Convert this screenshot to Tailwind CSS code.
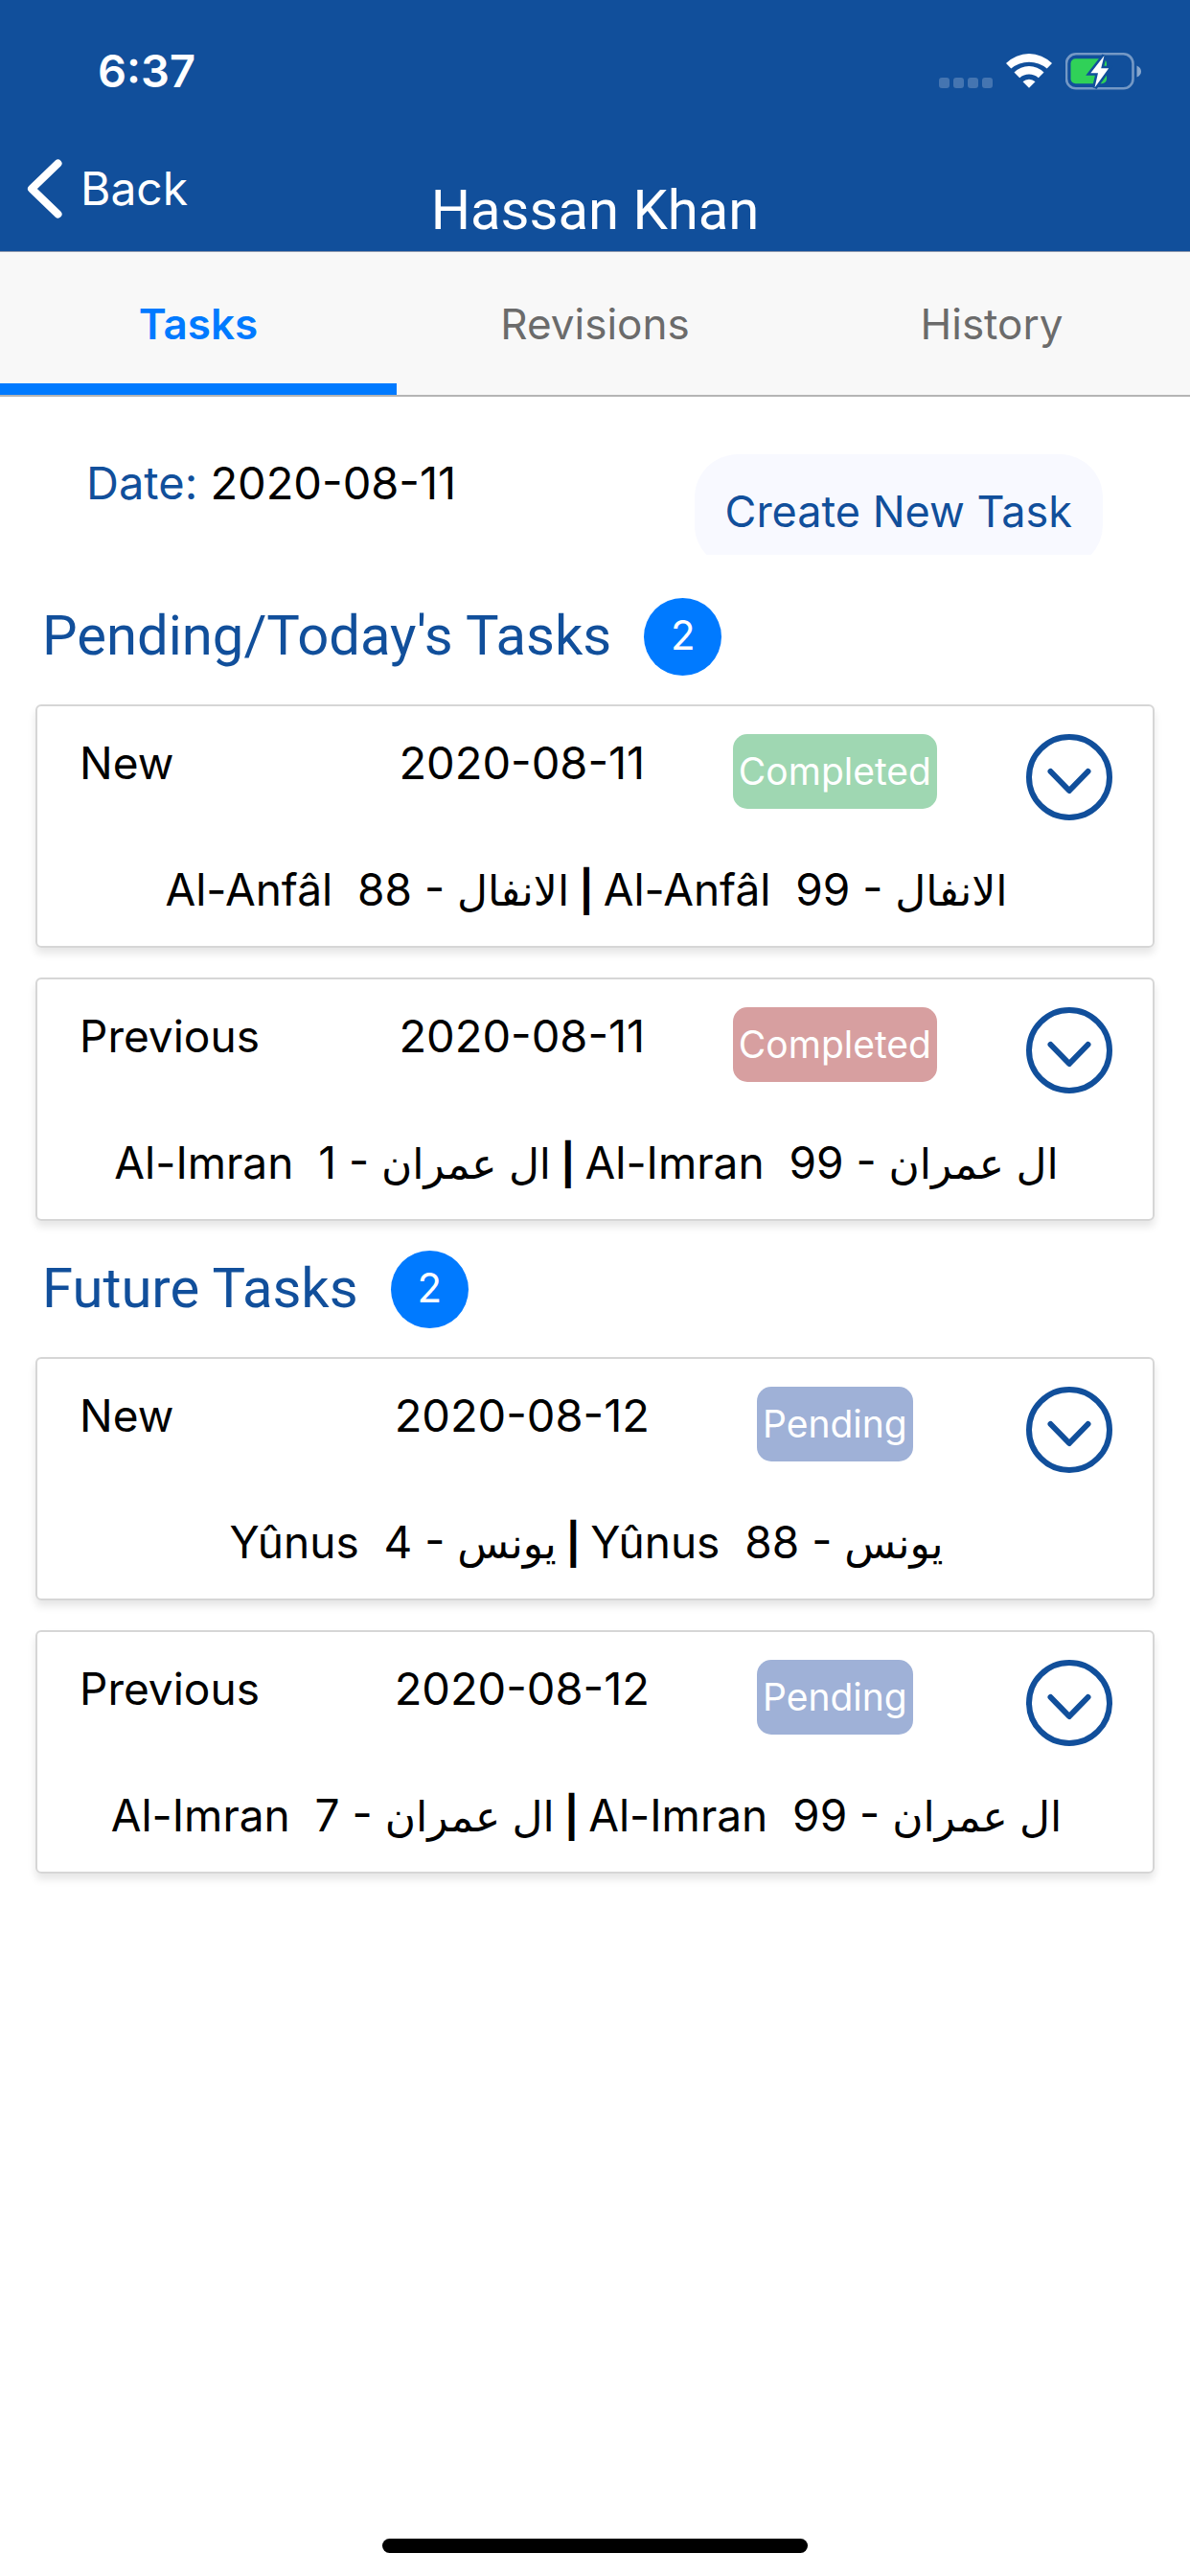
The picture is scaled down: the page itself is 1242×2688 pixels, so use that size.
<!DOCTYPE html>
<html lang="en">
<head>
    <meta charset="UTF-8">
    <meta name="viewport" content="width=device-width, initial-scale=1.0">
    <title>Hassan Khan - Tasks</title>
    <script src="https://cdn.jsdelivr.net/npm/@tailwindcss/browser@4"></script>
</head>
<body class="bg-white text-black font-['Inter','DejaVu_Sans',sans-serif]">

    <div class="flex flex-col min-h-screen">
        <header class="bg-[#114f9b] text-white border-b border-[#8a96ac]">
            <!-- Status bar -->
            <div class="flex items-center justify-between pt-[50px] pl-[102px] pr-[50px]">
                <span class="text-[47px] leading-[48px] font-semibold">6:37</span>
                <div class="flex items-center gap-[14px]">
                    <svg class="w-[56px] h-[48px]" viewBox="0 0 56 48" fill="#fff" fill-opacity=".22">
                        <rect x="0" y="31" width="11" height="11" rx="3"/>
                        <rect x="15" y="31" width="11" height="11" rx="3"/>
                        <rect x="30" y="31" width="11" height="11" rx="3"/>
                        <rect x="45" y="31" width="11" height="11" rx="3"/>
                    </svg>
                    <svg class="w-[48px] h-[48px]" viewBox="0 0 48 48" fill="#fff">
                        <path d="M0 16A34 34 0 0 1 48 16L42.7 21.5A29 29 0 0 0 5.3 21.5Z"/>
                        <path d="M8.5 25.5A22 22 0 0 1 39.5 25.5L33.8 31.2A15 15 0 0 0 14.2 31.2Z"/>
                        <path d="M17.5 35.2A9.5 9.5 0 0 1 30.5 35.2L24 41.7Z"/>
                    </svg>
                    <svg class="w-[80px] h-[48px]" viewBox="0 0 80 48">
                        <rect x="1" y="6.3" width="69.5" height="36" rx="10" fill="none" stroke="#fff" stroke-opacity=".42" stroke-width="2.6"/>
                        <path d="M74.5 18.5Q79 20.5 79 24.5T74.5 30.5Z" fill="#fff" fill-opacity=".5"/>
                        <rect x="5.5" y="11.3" width="37.5" height="26" rx="5" fill="#30d158"/>
                        <path d="M40.5 8L26.3 26.2H34L30.5 41.5L45.2 21.2H37.2Z" fill="#fff" stroke="#114f9b" stroke-width="5" paint-order="stroke"/>
                    </svg>
                </div>
            </div>
            <div class="grid grid-cols-3 items-center h-[130px] mt-[34px]">
                <a href="#" class="flex items-center gap-[19px] pl-[28px] text-[48px] leading-[60px]">
                    <svg class="w-[37px] h-[62px]" viewBox="0 0 37 62" fill="none" stroke="#fff" stroke-width="8" stroke-linecap="round" stroke-linejoin="round">
                        <path d="M32.5 4.5L5 31L32.5 57.5"/>
                    </svg>
                    Back
                </a>
                <h1 class="pt-11 text-center font-[Roboto,sans-serif] text-[58px] leading-[60px] whitespace-nowrap">Hassan Khan</h1>
            </div>
        </header>

        <nav class="grid grid-cols-3 bg-[#f8f8f8] border-b-2 border-[#b4b4b4] text-[44px] text-[#6b6b6b]">
            <button class="h-[149px] pt-3 border-b-12 border-[#007aff] text-[#007aff] font-semibold">Tasks</button>
            <button class="h-[149px]">Revisions</button>
            <button class="h-[149px]">History</button>
        </nav>

        <main class="flex-1 px-[37px] pt-[60px]">
            <div class="flex justify-between pl-[53px] pr-[54px]">
                <p class="text-[47px] leading-[60px]"><span class="text-[#114f9b]">Date:</span> 2020-08-11</p>
                <div class="h-[105px] overflow-hidden">
                    <button class="h-[119px] px-8 rounded-[45px] bg-[#f8f9ff] text-[#114f9b] text-[45px]">Create New Task</button>
                </div>
            </div>

            <div id="task-sections" class="mt-[45px]"></div>
        </main>

        <!-- Home indicator -->
        <div class="self-center w-[444px] h-[15px] mb-[24px] rounded-full bg-black"></div>
    </div>

    <script>
        const sections = [
            {
                title: "Pending/Today's Tasks",
                tasks: [
                    { type: "New", date: "2020-08-11", status: "Completed", color: "bg-[#9fd7b2]", surah: "Al-Anfâl", arabic: "الانفال", from: 88, to: 99 },
                    { type: "Previous", date: "2020-08-11", status: "Completed", color: "bg-[#d79fa0]", surah: "Al-Imran", arabic: "ال عمران", from: 1, to: 99 }
                ]
            },
            {
                title: "Future Tasks",
                tasks: [
                    { type: "New", date: "2020-08-12", status: "Pending", color: "bg-[#9fb1d7]", surah: "Yûnus", arabic: "يونس", from: 4, to: 88 },
                    { type: "Previous", date: "2020-08-12", status: "Pending", color: "bg-[#9fb1d7]", surah: "Al-Imran", arabic: "ال عمران", from: 7, to: 99 }
                ]
            }
        ];

        function ayah(task, number) {
            return `${task.surah}  ${number} - <span class="text-[44px] leading-[40px]" lang="ar">${task.arabic}</span>`;
        }

        function taskCard(task) {
            return `
                <article class="mb-[31px] py-[29px] border-2 border-[#d6d6d6] rounded-md shadow-[0_6px_9px_rgba(0,0,0,0.1)]">
                    <div class="grid grid-cols-[298fr_326fr_326fr_162fr] items-start pl-[44px] pr-[6px] text-[46px] leading-[60px]">
                        <span>${task.type}</span>
                        <span class="text-center text-[47px] leading-[60px]">${task.date}</span>
                        <span class="justify-self-center px-[6px] rounded-[15px] text-white text-[39px] leading-[78px] ${task.color}">${task.status}</span>
                        <button class="justify-self-center" aria-label="Expand">
                            <svg class="block w-[90px] h-[90px]" viewBox="0 0 90 90" fill="none" stroke="#114f9b" stroke-width="6" stroke-linecap="round" stroke-linejoin="round">
                                <circle cx="45" cy="45" r="42"/>
                                <path d="M25.5 39L45 59L64.5 39"/>
                            </svg>
                        </button>
                    </div>
                    <p class="mt-[42px] pr-[18px] text-center text-[46px] leading-[60px] whitespace-pre">${ayah(task, task.from)}<b class="text-[42px] leading-[40px]"> | </b>${ayah(task, task.to)}</p>
                </article>
            `;
        }

        document.getElementById("task-sections").innerHTML = sections.map(section => `
            <section>
                <div class="flex items-center gap-[34px] pl-[7px] mb-[30px]">
                    <h2 class="pb-1 font-[Roboto,sans-serif] text-[58px] leading-[60px] text-[#114f9b]">${section.title}</h2>
                    <span class="w-[81px] h-[81px] rounded-full bg-[#007aff] text-white text-center text-[42px] leading-[78px]">${section.tasks.length}</span>
                </div>
                ${section.tasks.map(taskCard).join('')}
            </section>
        `).join('');
    </script>
</body>
</html>
